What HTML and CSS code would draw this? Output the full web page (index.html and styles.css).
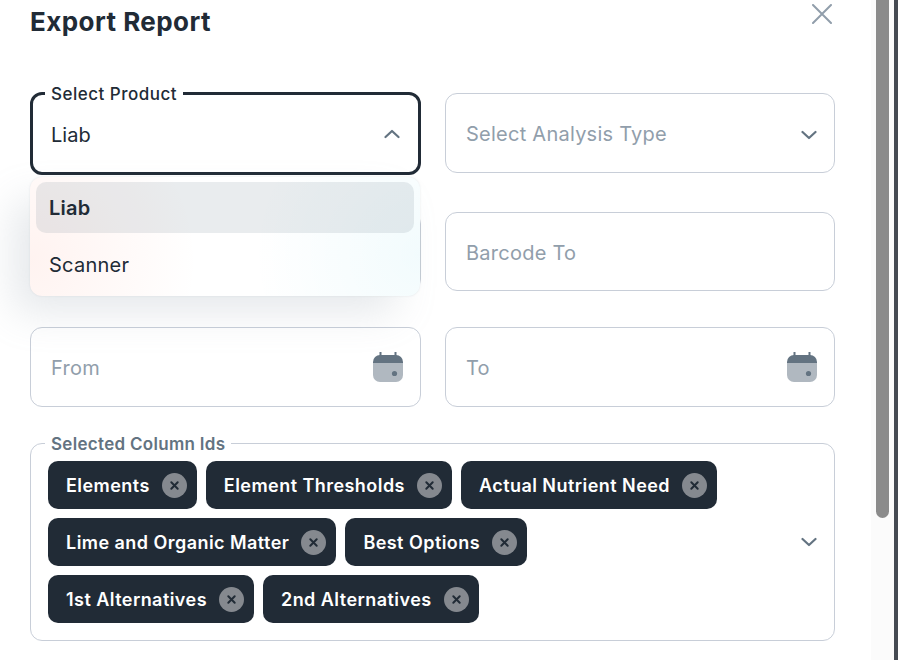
FILE: index.html
```html
<!DOCTYPE html>
<html lang="en">
<head>
<meta charset="utf-8">
<title>Export Report</title>
<link rel="stylesheet" href="styles.css">
</head>
<body>
<svg class="sprite" aria-hidden="true">
  <symbol id="chev-down" viewBox="0 0 16 10"><path d="M1.500 2 8 8l6.500-6" fill="none" stroke="currentColor" stroke-width="2.200" stroke-linecap="round" stroke-linejoin="round"/></symbol>
  <symbol id="chev-up" viewBox="0 0 16 10"><path d="M1.500 8 8 2l6.500 6" fill="none" stroke="currentColor" stroke-width="2.200" stroke-linecap="round" stroke-linejoin="round"/></symbol>
  <symbol id="calendar" viewBox="0 0 30 30">
    <rect x="6.500" y="0" width="2" height="5" fill="#637381"/>
    <rect x="21.500" y="0" width="2" height="5" fill="#637381"/>
    <path d="M0 11V10a7 7 0 0 1 7-7h16a7 7 0 0 1 7 7v1z" fill="#637381"/>
    <path d="M0 11h30v12a7 7 0 0 1-7 7H7a7 7 0 0 1-7-7z" fill="#b0b8c0"/>
    <circle cx="21.500" cy="21.500" r="2.600" fill="#637381"/>
  </symbol>
  <symbol id="chip-x" viewBox="0 0 25 25">
    <circle cx="12.500" cy="12.500" r="12.500" fill="#85898f"/>
    <path d="m9.300 9.300 6.400 6.400m0-6.400-6.400 6.400" fill="none" stroke="#212b36" stroke-width="2" stroke-linecap="round"/>
  </symbol>
</svg>

<div class="app">
  <main class="dialog">
    <header class="dialog-head">
      <h1 class="title">Export Report</h1>
      <button class="close" type="button" aria-label="Close">
        <svg width="20" height="20" viewBox="0 0 20 20"><path d="M1 1l18 18M19 1 1 19" fill="none" stroke="currentColor" stroke-width="2" stroke-linecap="round"/></svg>
      </button>
    </header>

    <form class="form">
      <div class="field field-focused">
        <span class="notch notch-focused">Select Product</span>
        <span class="value">Liab</span>
        <svg class="chev chev-open" width="16" height="10"><use href="#chev-up"/></svg>
        <ul class="menu">
          <li class="menu-item menu-item-active">Liab</li>
          <li class="menu-item">Scanner</li>
        </ul>
      </div>
      <div class="field">
        <span class="placeholder">Select Analysis Type</span>
        <svg class="chev" width="16" height="10"><use href="#chev-down"/></svg>
      </div>

      <div class="field field-row2"></div>
      <div class="field field-row2"><span class="placeholder">Barcode To</span></div>

      <div class="field">
        <span class="placeholder">From</span>
        <svg class="cal" width="30" height="30"><use href="#calendar"/></svg>
      </div>
      <div class="field">
        <span class="placeholder">To</span>
        <svg class="cal" width="30" height="30"><use href="#calendar"/></svg>
      </div>

      <div class="multi">
        <span class="notch">Selected Column Ids</span>
        <div class="chips">
          <span class="chip">Elements<svg class="chip-del" width="25" height="25"><use href="#chip-x"/></svg></span>
          <span class="chip">Element Thresholds<svg class="chip-del" width="25" height="25"><use href="#chip-x"/></svg></span>
          <span class="chip">Actual Nutrient Need<svg class="chip-del" width="25" height="25"><use href="#chip-x"/></svg></span>
          <span class="chip">Lime and Organic Matter<svg class="chip-del" width="25" height="25"><use href="#chip-x"/></svg></span>
          <span class="chip">Best Options<svg class="chip-del" width="25" height="25"><use href="#chip-x"/></svg></span>
          <span class="chip">1st Alternatives<svg class="chip-del" width="25" height="25"><use href="#chip-x"/></svg></span>
          <span class="chip">2nd Alternatives<svg class="chip-del" width="25" height="25"><use href="#chip-x"/></svg></span>
        </div>
        <svg class="chev chev-multi" width="16" height="10"><use href="#chev-down"/></svg>
      </div>
    </form>
  </main>

  <div class="scroll-track"><div class="scroll-thumb"></div></div>
  <div class="backdrop-edge"></div>
</div>
</body>
</html>
```

FILE: styles.css
```css
* { box-sizing: border-box; }

html, body {
  margin: 0;
  height: 100%;
  overflow: hidden;
  background: #fff;
}

body {
  font-family: Inter, "Noto Sans", "Liberation Sans", sans-serif;
  color: #212b36;
}

.sprite { position: absolute; width: 0; height: 0; }

.app { display: flex; height: 660px; }

.dialog { flex: 1; min-width: 0; padding: 0 36px 0 30px; }

.dialog-head {
  display: flex;
  justify-content: space-between;
  align-items: flex-start;
  height: 93px;
}

.title {
  margin: 0;
  font-size: 26px;
  letter-spacing: .45px;
  line-height: 44px;
  font-weight: 700;
  color: #212b36;
}

.close {
  display: block;
  margin: 4px 3px 0 0;
  padding: 0;
  border: 0;
  background: none;
  color: #919eab;
  width: 20px;
  height: 20px;
}
.close svg { display: block; }

.form {
  display: grid;
  grid-template-columns: 391px 390px;
  grid-template-rows: 80px 82px 80px 198px;
  column-gap: 24px;
  row-gap: 36px;
}

.field, .multi {
  position: relative;
  display: flex;
  align-items: center;
  justify-content: space-between;
  border: 1px solid #c8ced8;
  border-radius: 12px;
  background: #fff;
  font-size: 20px;
  letter-spacing: .25px;
}

.field { padding: 0 17px 0 20px; }

.field-focused {
  margin: -1px 0 -2px;
  border: 3px solid #212b36;
  padding-left: 18px;
  padding-right: 18px;
  z-index: 2;
}

.field-row2 { margin-top: 3px; }

.value, .placeholder { margin-top: 2px; }
.value { color: #212b36; letter-spacing: 0; }
.placeholder { color: #919eab; }

.chev { color: #637381; flex: none; display: block; margin-top: 3px; }
.chev-open { margin-top: 0; }
.chev-multi { margin-top: 0; }
.cal { flex: none; display: block; margin-top: -1px; }

.notch {
  position: absolute;
  left: 14px;
  top: -10px;
  padding: 0 6px;
  background: #fff;
  font-size: 17px;
  line-height: 20px;
  font-weight: 600;
  letter-spacing: .3px;
  color: #637381;
}

.notch-focused {
  left: 12px;
  top: -11px;
  color: #212b36;
  font-weight: 500;
  letter-spacing: .5px;
}

.menu {
  position: absolute;
  left: -3px;
  right: -2px;
  top: 82px;
  margin: 0;
  padding: 5px 6px;
  height: 119px;
  list-style: none;
  border-radius: 12px;
  background-color: #fff;
  background-image:
    radial-gradient(circle at 100% 65%, rgba(0, 184, 217, .05), rgba(0, 184, 217, 0) 42%),
    radial-gradient(circle at 0% 70%, rgba(255, 86, 48, .07), rgba(255, 86, 48, 0) 42%);
  box-shadow: 0 0 2px 0 rgba(145, 158, 171, .24), -20px 20px 40px -4px rgba(145, 158, 171, .24);
}

.menu-item {
  height: 51px;
  padding: 0 13px;
  display: flex;
  align-items: center;
  border-radius: 10px;
  font-size: 20px;
  color: #212b36;
}
.menu-item + .menu-item { margin-top: 6px; }

.menu-item-active {
  font-weight: 600;
  background: rgba(145, 158, 171, .2);
}

.multi {
  grid-column: 1 / -1;
  padding: 17px;
}

.chips {
  display: flex;
  flex-wrap: wrap;
  gap: 9px;
  width: 680px;
}

.chip {
  display: inline-flex;
  align-items: center;
  height: 48px;
  padding: 0 10px 0 18px;
  border-radius: 10px;
  background: #212b36;
  color: #fff;
  font-size: 18px;
  letter-spacing: .45px;
  font-weight: 600;
  white-space: nowrap;
}

.chip-del { flex: none; display: block; margin-left: 12px; }

.scroll-track {
  flex: none;
  width: 23px;
  padding: 0 5px;
  background: #fbfbfb;
}

.scroll-thumb {
  height: 518px;
  background: #8b8b8b;
  border-radius: 0 0 7px 7px;
}

.backdrop-edge { flex: none; width: 4px; background: #454a52; }
```
